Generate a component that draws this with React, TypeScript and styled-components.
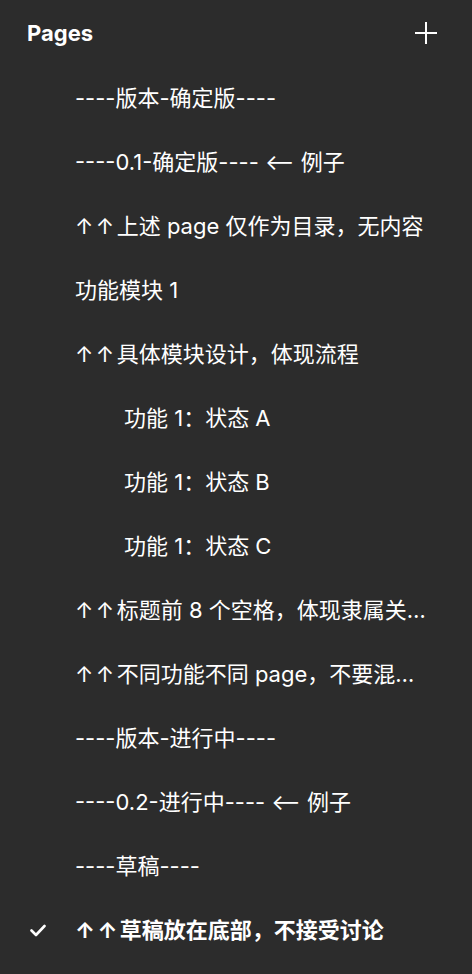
import * as React from 'react'
import styled, { createGlobalStyle } from 'styled-components'

const GlobalStyle = createGlobalStyle`
  html, body {
    margin: 0;
    padding: 0;
    background: #2c2c2c;
  }
  body {
    font-family: Inter, "Noto Sans CJK SC", sans-serif;
    -webkit-font-smoothing: antialiased;
  }
`

interface Page {
  title: string
  indent?: boolean
  selected?: boolean
}

const pages: Page[] = [
  { title: '----版本-确定版----' },
  { title: '----0.1-确定版---- ⟵ 例子' },
  { title: '↑↑上述 page 仅作为目录，无内容' },
  { title: '功能模块 1' },
  { title: '↑↑具体模块设计，体现流程' },
  { title: '功能 1：状态 A', indent: true },
  { title: '功能 1：状态 B', indent: true },
  { title: '功能 1：状态 C', indent: true },
  { title: '↑↑标题前 8 个空格，体现隶属关系' },
  { title: '↑↑不同功能不同 page，不要混在一起' },
  { title: '----版本-进行中----' },
  { title: '----0.2-进行中---- ⟵ 例子' },
  { title: '----草稿----' },
  { title: '↑↑草稿放在底部，不接受讨论', selected: true },
]

const PlusIcon = () => (
  <svg width="22" height="22" viewBox="0 0 22 22" fill="none">
    <path d="M11 0v22M0 11h22" stroke="#ffffff" strokeWidth="2" />
  </svg>
)

const CheckIcon = () => (
  <svg width="16" height="13" viewBox="0 0 16 13" fill="none">
    <path
      d="M1.5 6.5l4.5 4.5L14.5 2"
      stroke="#ffffff"
      strokeWidth="2.6"
      strokeLinecap="round"
      strokeLinejoin="round"
    />
  </svg>
)

// the arrows sit in slightly wider cells than Inter gives them
const renderTitle = (title: string) =>
  title.split(/(↑+)/).map((part, i) =>
    part.startsWith('↑') ? <Arrow key={i}>{part}</Arrow> : part
  )

const App: React.FC = () => {
  return (
    <>
      <GlobalStyle />
      <Panel>
        <Header>
          <span className="title">Pages</span>
          <AddButton aria-label="Add page">
            <PlusIcon />
          </AddButton>
        </Header>
        <List>
          {pages.map((page, i) => (
            <Row key={i} selected={page.selected}>
              <span className="check">{page.selected && <CheckIcon />}</span>
              <Title indent={page.indent}>{renderTitle(page.title)}</Title>
            </Row>
          ))}
        </List>
      </Panel>
    </>
  )
}

const Panel = styled.div`
  width: 472px;
  min-height: 974px;
  background: #2c2c2c;
  color: #ffffff;
`

const Header = styled.div`
  display: flex;
  height: 66px;
  padding: 0 35px 0 27px;
  align-items: center;
  justify-content: space-between;
  box-sizing: border-box;

  .title {
    font-size: 22px;
    font-weight: 700;
    letter-spacing: 0;
  }
`

const AddButton = styled.button`
  display: flex;
  padding: 0;
  border: none;
  background: none;
  cursor: pointer;
`

const List = styled.div`
  display: flex;
  flex-direction: column;
`

const Row = styled.div<{ selected?: boolean }>`
  display: grid;
  grid-template-columns: 75px 1fr;
  height: 64px;
  padding-right: 44px;
  align-items: center;
  font-size: 22px;
  line-height: 30px;
  font-weight: ${(p) => (p.selected ? 700 : 400)};

  .check {
    display: flex;
    padding-left: 30px;
    align-items: center;
  }
`

const Title = styled.span<{ indent?: boolean }>`
  padding-left: ${(p) => (p.indent ? '49px' : '0')};
  overflow: hidden;
  white-space: nowrap;
  text-overflow: ellipsis;
`

const Arrow = styled.span`
  letter-spacing: 2.5px;
`

export default App
